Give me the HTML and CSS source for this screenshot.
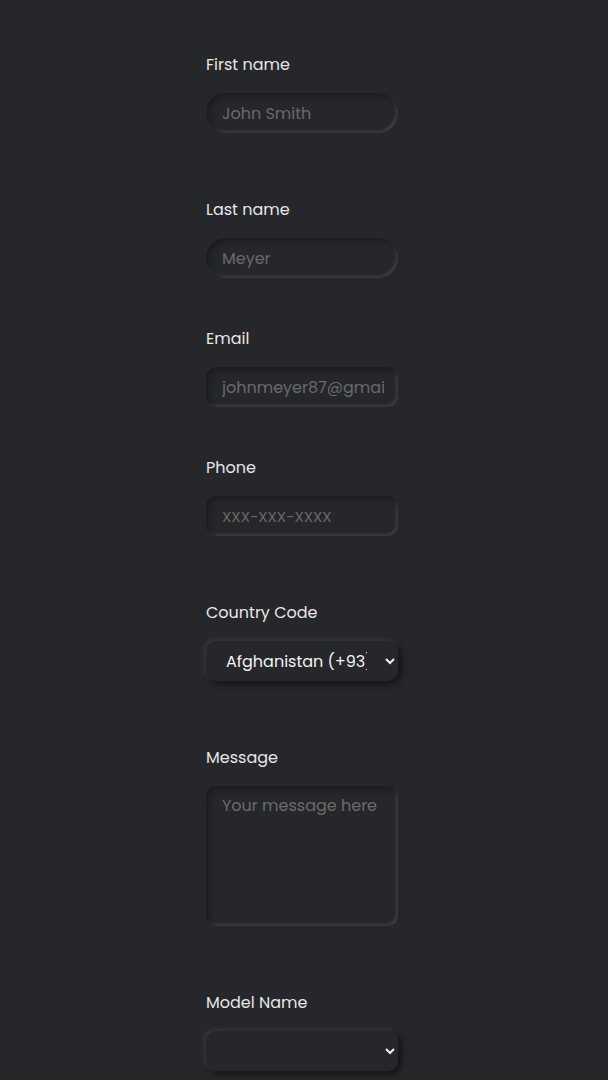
FILE: index.html
```html
<!DOCTYPE html>
<html>
<head>
<meta charset="utf-8">
<link rel="stylesheet" href="styles.css">
</head>
<body>
<form class="form">
  <div class="field field-wide">
    <label class="label">First name</label>
    <input class="input pill" type="text" placeholder="John Smith">
  </div>
  <div class="field">
    <label class="label">Last name</label>
    <input class="input pill" type="text" placeholder="Meyer">
  </div>
  <div class="field">
    <label class="label">Email</label>
    <input class="input box" type="email" placeholder="johnmeyer87@gmail.com">
  </div>
  <div class="field field-wide">
    <label class="label">Phone</label>
    <input class="input box small" type="tel" placeholder="XXX-XXX-XXXX">
  </div>
  <div class="field field-wide">
    <label class="label">Country Code</label>
    <select class="select">
      <option>Afghanistan (+93)</option>
    </select>
  </div>
  <div class="field field-wide">
    <label class="label">Message</label>
    <textarea class="input box area" placeholder="Your message here"></textarea>
  </div>
  <div class="field">
    <label class="label">Model Name</label>
    <select class="select">
      <option></option>
    </select>
  </div>
</form>
</body>
</html>
```

FILE: styles.css
```css
html, body {
  margin: 0;
  padding: 0;
  background: #26272b;
}
body {
  font-family: "Poppins", "Open Sans", "DejaVu Sans", sans-serif;
  color: #ececec;
}
.form {
  display: flex;
  flex-direction: column;
  padding: 52px 0 40px 206px;
}
.field {
  display: flex;
  flex-direction: column;
  align-items: flex-start;
  margin-bottom: 48px;
}
.field-wide {
  margin-bottom: 64px;
}
.label {
  font-size: 16px;
  line-height: 26px;
  font-weight: 400;
  color: #e6e6e6;
  margin-bottom: 15px;
}
.input {
  box-sizing: border-box;
  width: 192px;
  height: 40px;
  border: none;
  outline: none;
  background: #26272b;
  font-family: inherit;
  font-size: 16px;
  color: #cfcfcf;
  padding: 0 14px 0 16px;
  box-shadow: inset 3px 3px 6px #1b1c1f, inset -2px -2px 3px rgba(255, 255, 255, 0.12);
}
.input::placeholder {
  color: #6a6a6c;
}
.small {
  font-size: 15px;
}
.pill {
  border-radius: 20px;
}
.box {
  border-radius: 10px;
}
.area {
  height: 140px;
  padding: 8px 16px;
  resize: none;
  line-height: 24px;
}
.select {
  box-sizing: border-box;
  width: 192px;
  height: 40px;
  border: none;
  outline: none;
  border-radius: 10px;
  background: #26272b;
  color: #f2f2f2;
  font-family: inherit;
  font-size: 16px;
  padding: 0 15px 0 16px;
  box-shadow: -2px -2px 5px rgba(255, 255, 255, 0.09), 3px 3px 7px rgba(0, 0, 0, 0.55);
  color-scheme: dark;
}
```
